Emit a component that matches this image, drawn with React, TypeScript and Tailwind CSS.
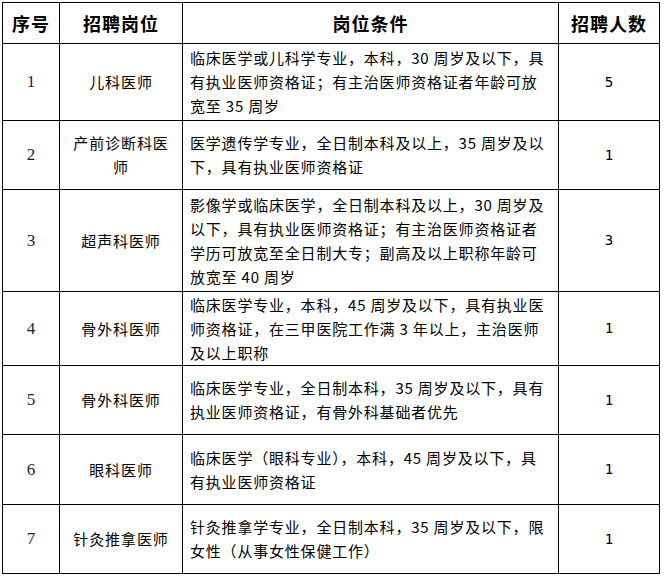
const rows = [
  {
    no: "1",
    post: ["儿科医师"],
    cond: [
      "临床医学或儿科学专业，本科，30 周岁及以下，具",
      "有执业医师资格证；有主治医师资格证者年龄可放",
      "宽至 35 周岁",
    ],
    count: "5",
    h: "h-[76px]",
  },
  {
    no: "2",
    post: ["产前诊断科医", "师"],
    cond: ["医学遗传学专业，全日制本科及以上，35 周岁及以", "下，具有执业医师资格证"],
    count: "1",
    h: "h-[68px]",
  },
  {
    no: "3",
    post: ["超声科医师"],
    cond: [
      "影像学或临床医学，全日制本科及以上，30 周岁及",
      "以下，具有执业医师资格证；有主治医师资格证者",
      "学历可放宽至全日制大专；副高及以上职称年龄可",
      "放宽至 40 周岁",
    ],
    count: "3",
    h: "h-[101px]",
  },
  {
    no: "4",
    post: ["骨外科医师"],
    cond: [
      "临床医学专业，本科，45 周岁及以下，具有执业医",
      "师资格证，在三甲医院工作满 3 年以上，主治医师",
      "及以上职称",
    ],
    count: "1",
    h: "h-[73px]",
  },
  {
    no: "5",
    post: ["骨外科医师"],
    cond: ["临床医学专业，全日制本科，35 周岁及以下，具有", "执业医师资格证，有骨外科基础者优先"],
    count: "1",
    h: "h-[68px]",
  },
  {
    no: "6",
    post: ["眼科医师"],
    cond: ["临床医学（眼科专业），本科，45 周岁及以下，具", "有执业医师资格证"],
    count: "1",
    h: "h-[69px]",
  },
  {
    no: "7",
    post: ["针灸推拿医师"],
    cond: ["针灸推拿学专业，全日制本科，35 周岁及以下，限", "女性（从事女性保健工作）"],
    count: "1",
    h: "h-[68px]",
  },
];

const cjk = "font-['SimSun','Noto_Sans_CJK_SC',sans-serif]";

export default function App() {
  return (
    <div className={`w-[664px] h-[576px] bg-white pl-[2px] pt-[2px] text-black ${cjk}`}>
      <div className="grid w-[658px] grid-cols-[56px_122px_375px_100px] gap-px bg-black p-px">
        {/* header */}
        <div className="flex h-[40px] items-center justify-center bg-white text-[18px] font-bold tracking-[1px]">
          序号
        </div>
        <div className="flex h-[40px] items-center justify-center bg-white text-[18px] font-bold tracking-[1px]">
          招聘岗位
        </div>
        <div className="flex h-[40px] items-center justify-center bg-white text-[18px] font-bold tracking-[1px]">
          岗位条件
        </div>
        <div className="flex h-[40px] items-center justify-center bg-white text-[18px] font-bold tracking-[1px]">
          招聘人数
        </div>

        {rows.map((r) => (
          <div key={r.no} className="contents">
            <div
              className={`${r.h} flex items-center justify-center bg-white font-['Liberation_Serif',serif] text-[17px] text-[#1c1c40]`}
            >
              {r.no}
            </div>
            <div
              className={`${r.h} flex flex-col items-center justify-center bg-white text-[15px] leading-[24px] tracking-[0.9px]`}
            >
              {r.post.map((p) => (
                <span key={p} className="whitespace-nowrap">
                  {p}
                </span>
              ))}
            </div>
            <div
              className={`${r.h} flex flex-col justify-center bg-white pl-[7px] text-[15px] leading-[24px] tracking-[0.8px]`}
            >
              {r.cond.map((c) => (
                <span key={c} className="whitespace-nowrap">
                  {c}
                </span>
              ))}
            </div>
            <div
              className={`${r.h} flex items-center justify-center bg-white font-['DejaVu_Sans_Mono','Liberation_Mono',monospace] text-[14px]`}
            >
              {r.count}
            </div>
          </div>
        ))}
      </div>
    </div>
  );
}
